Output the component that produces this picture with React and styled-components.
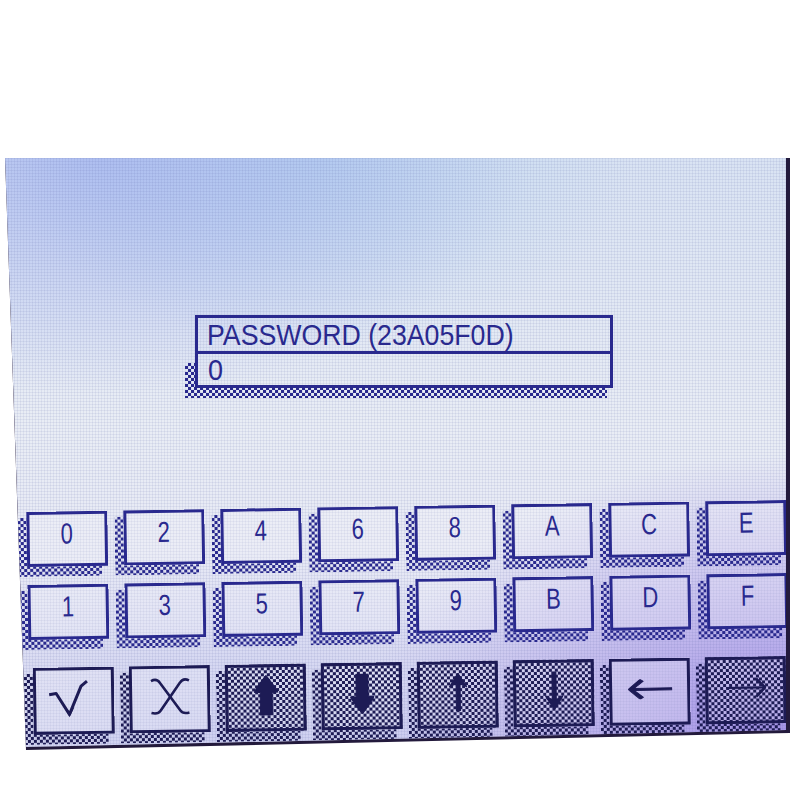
import React from 'react'
import styled, { createGlobalStyle, css } from 'styled-components'

const NAVY = '#29298e'
const DEEP = '#1d1b55'

const GlobalStyle = createGlobalStyle`
    html, body {
        margin: 0;
        padding: 0;
        background: #fff;
    }
    body {
        font-family: "Liberation Sans", Arial, sans-serif;
    }
`

const checker = (color) => css`
    background-image: repeating-conic-gradient(${color} 0% 25%, transparent 0% 50%);
    background-size: 6px 6px;
`

const Page = styled.div`
    width: 800px;
    height: 800px;
    padding: 158px 0 0 5px;
    box-sizing: border-box;
    overflow: hidden;
`

const Bezel = styled.div`
    width: 785px;
    height: 592px;
    background: #231a3c;
    clip-path: polygon(0 0, 100% 0, 100% 575px, 21px 100%);
`

const Screen = styled.div`
    height: 100%;
    box-sizing: border-box;
    padding-top: 157px;
    clip-path: polygon(0 0, 781px 0, 781px 572px, 21px 589px);
    background:
        repeating-linear-gradient(90deg, rgba(80, 90, 160, 0.09) 0 1px, transparent 1px 3px),
        repeating-linear-gradient(0deg, rgba(80, 90, 160, 0.09) 0 1px, transparent 1px 3px),
        radial-gradient(55% 40% at 12% 0%, rgba(150, 168, 238, 0.6), rgba(150, 168, 238, 0) 100%),
        radial-gradient(40% 32% at 40% 0%, rgba(160, 200, 236, 0.45), rgba(160, 200, 236, 0) 100%),
        radial-gradient(55% 50% at 100% 100%, rgba(152, 130, 228, 0.85), rgba(152, 130, 228, 0) 100%),
        radial-gradient(50% 35% at 30% 100%, rgba(198, 200, 240, 0.6), rgba(198, 200, 240, 0) 100%),
        linear-gradient(180deg, #d9e3f3 0%, #e9edf5 45%, #e7e9f5 70%, #d8d9f1 100%);
`

/* password panel */

const PasswordBox = styled.div`
    margin-left: 190px;
    width: 418px;
    color: ${NAVY};
`

const HeaderRow = styled.div`
    height: 39px;
    box-sizing: border-box;
    padding: 5px 0 0 12px;
    box-shadow: inset 0 0 0 3px ${NAVY};
`

const InputRow = styled.div`
    position: relative;
    margin-top: -3px;
    height: 37px;
    box-sizing: border-box;
    padding: 4px 0 0 13px;
    box-shadow: inset 0 0 0 3px ${NAVY};

    &::before {
        content: '';
        position: absolute;
        left: -10px;
        top: 12px;
        width: calc(100% + 4px);
        height: calc(100% - 2px);
        ${checker(NAVY)}
        clip-path: polygon(0 0, 10px 0, 10px calc(100% - 10px), 100% calc(100% - 10px), 100% 100%, 0 100%);
    }
`

const LcdText = styled.span`
    display: inline-block;
    font-size: 30px;
    line-height: 30px;
    transform: scaleX(${(p) => p.$squeeze || 0.89});
    transform-origin: left center;
    white-space: nowrap;
`

/* keypad */

const Keypad = styled.div`
    margin: 118px 0 0 23px;
    width: 760px;
    transform: rotate(-0.9deg);
    transform-origin: 50% 50%;
`

const HexGrid = styled.div`
    display: grid;
    grid-template-columns: repeat(8, 81px);
    grid-auto-rows: 55px;
    column-gap: 16px;
    row-gap: 18px;
`

const ActionRow = styled.div`
    display: grid;
    grid-template-columns: repeat(8, 81px);
    grid-auto-rows: 67px;
    column-gap: 15px;
    margin-top: 28px;
    padding-left: 4px;
`

const Key = styled.button`
    position: relative;
    display: flex;
    align-items: center;
    justify-content: center;
    box-sizing: border-box;
    margin: 0;
    padding: 0 0 ${(p) => (p.$tall ? 5 : 10)}px;
    border: none;
    font: inherit;
    color: ${(p) => (p.$tall ? DEEP : NAVY)};
    background: rgba(246, 247, 252, 0.25);
    ${(p) => p.$dark && checker(DEEP)}
    box-shadow: inset 0 0 0 3px ${(p) => (p.$tall ? DEEP : NAVY)};
    cursor: pointer;

    &::before {
        content: '';
        position: absolute;
        left: -9px;
        top: 6px;
        width: calc(100% + 3px);
        height: calc(100% + 4px);
        ${(p) => checker(p.$tall ? DEEP : NAVY)}
        clip-path: polygon(0 0, 9px 0, 9px calc(100% - 10px), 100% calc(100% - 10px), 100% 100%, 0 100%);
    }
`

const KeyLabel = styled.span`
    display: inline-block;
    font-size: 29px;
    line-height: 29px;
    transform: scaleX(0.76);
`

const Icon = styled.svg`
    display: block;
    fill: ${DEEP};
    stroke: ${DEEP};
`

const CheckIcon = () => (
    <Icon width="40" height="40" viewBox="0 0 40 40" style={{ marginRight: 12 }}>
        <polyline points="1,16 8,15 21,36 33,8 39,3" fill="none" strokeWidth="3" strokeLinejoin="round" />
        <polygon points="16,29 21,39 26,29 21,33" stroke="none" />
    </Icon>
)

const CrossIcon = () => (
    <Icon width="40" height="40" viewBox="0 0 40 40" fill="none" style={{ fill: 'none' }}>
        <path d="M1 4 C5 2 8 3 10 6 L30 34 C32 37 35 37 39 36" strokeWidth="2.6" />
        <path d="M39 4 C35 2 32 3 30 6 L10 34 C8 37 5 37 1 36" strokeWidth="2.6" />
    </Icon>
)

const FatArrow = ({ down }) => (
    <Icon width="24" height="40" viewBox="0 0 24 40" stroke="none" style={down ? { transform: 'rotate(180deg)' } : undefined}>
        <path d="M12 0 C15 4 22 13 24 17 L18 17 L18 40 L6 40 L6 17 L0 17 C2 13 9 4 12 0 Z" />
    </Icon>
)

const ThinArrow = ({ down }) => (
    <Icon width="18" height="38" viewBox="0 0 18 38" stroke="none" style={down ? { transform: 'rotate(180deg)' } : undefined}>
        <path d="M9 0 L18 14 L11 10 L11 38 L7 38 L7 10 L0 14 Z" />
    </Icon>
)

const LeftArrow = () => (
    <Icon width="44" height="20" viewBox="0 0 44 20" stroke="none">
        <path d="M0 10 L12 0 L15 2 L6 9 L44 9 L44 11 L6 11 L15 18 L12 20 Z" />
    </Icon>
)

const RightArrow = () => (
    <Icon width="40" height="22" viewBox="0 0 40 22" fill="none" style={{ fill: 'none' }}>
        <path d="M0 11 H38" strokeWidth="2" />
        <path d="M30 2 L39 11 L30 20" strokeWidth="2.6" />
    </Icon>
)

const hexTop = ['0', '2', '4', '6', '8', 'A', 'C', 'E']
const hexBottom = ['1', '3', '5', '7', '9', 'B', 'D', 'F']

const actions = [
    { id: 'ok', icon: <CheckIcon /> },
    { id: 'cancel', icon: <CrossIcon /> },
    { id: 'pgup', dark: true, icon: <FatArrow /> },
    { id: 'pgdn', dark: true, icon: <FatArrow down /> },
    { id: 'up', dark: true, icon: <ThinArrow /> },
    { id: 'down', dark: true, icon: <ThinArrow down /> },
    { id: 'left', icon: <LeftArrow /> },
    { id: 'right', dark: true, icon: <RightArrow /> },
]

const App = () => (
    <Page>
        <GlobalStyle />
        <Bezel>
            <Screen>
                <PasswordBox>
                    <HeaderRow>
                        <LcdText>PASSWORD (23A05F0D)</LcdText>
                    </HeaderRow>
                    <InputRow>
                        <LcdText $squeeze={0.9}>0</LcdText>
                    </InputRow>
                </PasswordBox>

                <Keypad>
                    <HexGrid>
                        {[...hexTop, ...hexBottom].map((k) => (
                            <Key key={k}>
                                <KeyLabel>{k}</KeyLabel>
                            </Key>
                        ))}
                    </HexGrid>
                    <ActionRow>
                        {actions.map((a) => (
                            <Key key={a.id} $tall $dark={a.dark}>
                                {a.icon}
                            </Key>
                        ))}
                    </ActionRow>
                </Keypad>
            </Screen>
        </Bezel>
    </Page>
)

export default App
